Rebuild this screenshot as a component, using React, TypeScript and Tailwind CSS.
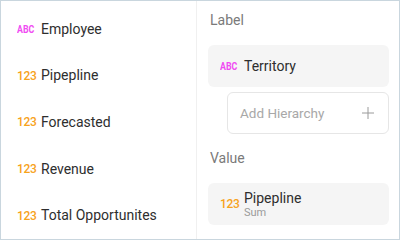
import React from "react";

const Tag = ({ kind }: { kind: "abc" | "num" }) =>
  kind === "abc" ? (
    <span className="w-[18px] text-[11px] font-bold leading-none text-[#f04cf2]" style={{ fontFamily: "Roboto, sans-serif", transform: "scaleX(0.8)", transformOrigin: "left" }}>
      ABC
    </span>
  ) : (
    <span className="w-[18px] text-[12px] font-medium leading-none tracking-[-0.3px] text-[#f7a21b]">123</span>
  );

const items: { kind: "abc" | "num"; label: string }[] = [
  { kind: "abc", label: "Employee" },
  { kind: "num", label: "Pipepline" },
  { kind: "num", label: "Forecasted" },
  { kind: "num", label: "Revenue" },
  { kind: "num", label: "Total Opportunites" },
];

export default function App() {
  return (
    <div className="w-[400px] h-[240px] border border-[#c9d6de] bg-white flex overflow-hidden" style={{ fontFamily: "Roboto, 'Noto Sans', sans-serif" }}>
      <div className="w-[195px] flex flex-col pt-[5px] pl-[16px]">
        {items.map((it) => (
          <div key={it.label} className="h-[47px] flex items-center gap-[6px]">
            <Tag kind={it.kind} />
            <span className="text-[14px] text-[#2e2e2e]">{it.label}</span>
          </div>
        ))}
      </div>
      <div className="w-px bg-[#f0f0f0]" />
      <div className="flex-1 flex flex-col pl-[11px] pr-[10px]">
        <div className="text-[14px] text-[#7a7a7a] mt-[10px] ml-[2px] leading-[18px]">Label</div>
        <div className="mt-[16px] h-[42px] rounded-[6px] bg-[#f5f5f5] flex items-center pl-[12px] gap-[6px]">
          <Tag kind="abc" />
          <span className="text-[14px] text-[#2e2e2e]">Territory</span>
        </div>
        <div className="mt-[5px] ml-[19px] h-[42px] rounded-[6px] border border-[#e6e6e6] flex items-center justify-between pl-[12px] pr-[14px]">
          <span className="text-[13.5px] text-[#a8a8a8]">Add Hierarchy</span>
          <svg width="12" height="12" viewBox="0 0 12 12" className="text-[#9a9a9a]">
            <path d="M6 0V12M0 6H12" stroke="currentColor" strokeWidth="1" />
          </svg>
        </div>
        <div className="text-[14px] text-[#7a7a7a] mt-[15px] ml-[2px] leading-[18px]">Value</div>
        <div className="mt-[16px] h-[42px] rounded-[6px] bg-[#f5f5f5] flex items-center pl-[12px] gap-[6px]">
          <Tag kind="num" />
          <div className="flex flex-col">
            <span className="text-[14px] leading-[16px] text-[#2e2e2e]">Pipepline</span>
            <span className="text-[11px] leading-[13px] text-[#9a9a9a]">Sum</span>
          </div>
        </div>
      </div>
    </div>
  );
}
